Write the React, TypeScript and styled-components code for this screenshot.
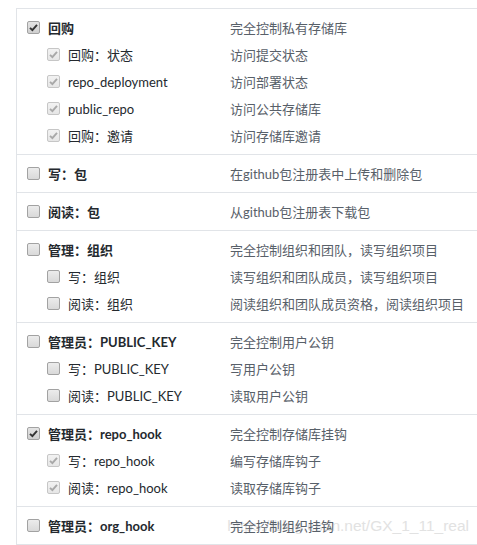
import React from "react";
import styled, { createGlobalStyle } from "styled-components";

const GlobalStyle = createGlobalStyle`
  html, body {
    margin: 0;
    padding: 0;
    background: #ffffff;
    overflow: hidden;
  }
  body {
    font-family: Lato, "Noto Sans CJK SC", sans-serif;
    font-size: 13px;
    color: #24292e;
  }
`;

type Scope = {
  label: string;
  desc: string;
  checked?: boolean;
  sub?: boolean;
};

const groups: Scope[][] = [
  [
    { label: "回购", desc: "完全控制私有存储库", checked: true },
    { label: "回购：状态", desc: "访问提交状态", checked: true, sub: true },
    { label: "repo_deployment", desc: "访问部署状态", checked: true, sub: true },
    { label: "public_repo", desc: "访问公共存储库", checked: true, sub: true },
    { label: "回购：邀请", desc: "访问存储库邀请", checked: true, sub: true },
  ],
  [{ label: "写：包", desc: "在github包注册表中上传和删除包" }],
  [{ label: "阅读：包", desc: "从github包注册表下载包" }],
  [
    { label: "管理：组织", desc: "完全控制组织和团队，读写组织项目" },
    { label: "写：组织", desc: "读写组织和团队成员，读写组织项目", sub: true },
    { label: "阅读：组织", desc: "阅读组织和团队成员资格，阅读组织项目", sub: true },
  ],
  [
    { label: "管理员：PUBLIC_KEY", desc: "完全控制用户公钥" },
    { label: "写：PUBLIC_KEY", desc: "写用户公钥", sub: true },
    { label: "阅读：PUBLIC_KEY", desc: "读取用户公钥", sub: true },
  ],
  [
    { label: "管理员：repo_hook", desc: "完全控制存储库挂钩", checked: true },
    { label: "写：repo_hook", desc: "编写存储库钩子", checked: true, sub: true },
    { label: "阅读：repo_hook", desc: "读取存储库钩子", checked: true, sub: true },
  ],
  [{ label: "管理员：org_hook", desc: "完全控制组织挂钩" }],
];

const Check = ({ checked, sub }: { checked?: boolean; sub?: boolean }) => (
  <Box $checked={checked} $disabled={checked && sub}>
    {checked && (
      <svg width="9" height="9" viewBox="0 0 9 9">
        <path
          d="M1 4.8 L3.4 7.2 L8 1.8"
          fill="none"
          stroke={sub ? "#a8a8a8" : "#333333"}
          strokeWidth="1.9"
        />
      </svg>
    )}
  </Box>
);

const App = () => {
  return (
    <Page>
      <GlobalStyle />
      <Panel>
        {groups.map((group, gi) => (
          <Section key={gi}>
            {group.map((s) => (
              <Row key={s.label}>
                <Label $sub={s.sub}>
                  <Check checked={s.checked} sub={s.sub} />
                  <span>{s.label}</span>
                </Label>
                <Desc>{s.desc}</Desc>
              </Row>
            ))}
            {gi === groups.length - 1 && (
              <Watermark>https://blog.csdn.net/GX_1_11_real</Watermark>
            )}
          </Section>
        ))}
      </Panel>
    </Page>
  );
};

export default App;

const Page = styled.div`
  padding: 8px 0 0 16px;
`;

const Panel = styled.div`
  width: 480px;
  border: 1px solid #e1e4e8;
`;

const Section = styled.div`
  position: relative;
  display: flex;
  flex-direction: column;
  row-gap: 7px;
  padding: 9px 0 8px;
  & + & {
    border-top: 1px solid #e1e4e8;
  }
`;

const Row = styled.div`
  display: grid;
  grid-template-columns: 213px 1fr;
  height: 20px;
  line-height: 20px;
  position: relative;
  z-index: 1;
`;

const Label = styled.label<{ $sub?: boolean }>`
  display: flex;
  align-items: center;
  column-gap: 8px;
  padding-left: ${(p) => (p.$sub ? 30 : 10)}px;
  font-weight: ${(p) => (p.$sub ? 400 : 700)};
  color: #24292e;
  white-space: nowrap;
`;

const Box = styled.span<{ $checked?: boolean; $disabled?: boolean }>`
  box-sizing: border-box;
  display: inline-flex;
  align-items: center;
  justify-content: center;
  width: 13px;
  height: 13px;
  border-radius: 2px;
  margin-top: -1px;
  border: 1px solid ${(p) => (p.$disabled ? "#c6c6c6" : "#a2a2a2")};
  background: ${(p) =>
    p.$disabled
      ? "linear-gradient(#f2f2f2, #e6e6e6)"
      : p.$checked
      ? "linear-gradient(#e4e4e4, #cfcfcf)"
      : "linear-gradient(#ececec, #d9d9d9)"};
`;

const Desc = styled.div`
  color: #586069;
  white-space: nowrap;
`;

const Watermark = styled.div`
  position: absolute;
  right: 28px;
  top: 7px;
  font-family: "Liberation Sans", Arial, sans-serif;
  font-size: 15.5px;
  line-height: 24px;
  color: #e2e2e2;
  z-index: 0;
`;
